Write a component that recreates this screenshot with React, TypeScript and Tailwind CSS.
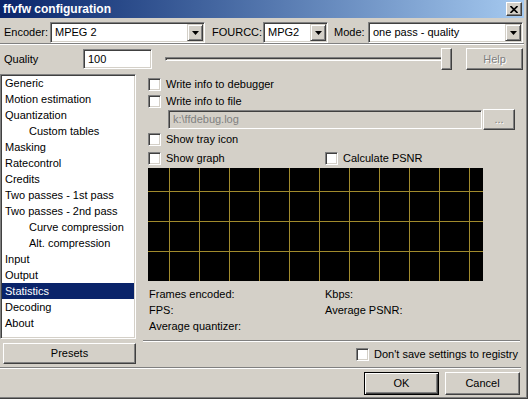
import { useState } from "react";

const pages: [string, boolean][] = [
  ["Generic", false],
  ["Motion estimation", false],
  ["Quantization", false],
  ["Custom tables", true],
  ["Masking", false],
  ["Ratecontrol", false],
  ["Credits", false],
  ["Two passes - 1st pass", false],
  ["Two passes - 2nd pass", false],
  ["Curve compression", true],
  ["Alt. compression", true],
  ["Input", false],
  ["Output", false],
  ["Statistics", false],
  ["Decoding", false],
  ["About", false],
];

const sunken =
  "border border-t-[#808080] border-l-[#808080] border-r-white border-b-white shadow-[inset_1px_1px_0_#404040,inset_-1px_-1px_0_#d4d0c8]";
const raised =
  "border border-t-white border-l-white border-r-[#404040] border-b-[#404040] shadow-[inset_-1px_-1px_0_#808080] bg-[#d4d0c8]";
const disabledText = "text-[#808080] [text-shadow:1px_1px_0_#ffffff]";

function Combo({ value, width }: { value: string; width: string }) {
  return (
    <div className={`${width} h-[21px] bg-white flex items-center p-[1px] ${sunken}`}>
      <span className="flex-1 pl-[3px] whitespace-nowrap overflow-hidden">{value}</span>
      <div className="w-[16px] h-[17px] flex items-center justify-center bg-[#d4d0c8] border border-t-[#d4d0c8] border-l-[#d4d0c8] border-r-[#404040] border-b-[#404040] shadow-[inset_1px_1px_0_#ffffff,inset_-1px_-1px_0_#808080]">
        <svg width="7" height="4" viewBox="0 0 7 4">
          <polygon points="0,0 7,0 3.5,4" fill="#000" />
        </svg>
      </div>
    </div>
  );
}

function Check({ label, checked, onToggle }: { label: string; checked: boolean; onToggle: () => void }) {
  return (
    <div className="flex items-center h-[16px] cursor-default" onClick={onToggle}>
      <div className={`w-[13px] h-[13px] bg-white flex items-center justify-center ${sunken}`}>
        {checked && (
          <svg width="7" height="7" viewBox="0 0 7 7">
            <path d="M0 3l2 2 5-5v2l-5 5-2-2z" fill="#000" />
          </svg>
        )}
      </div>
      <span className="ml-[5px] whitespace-nowrap">{label}</span>
    </div>
  );
}

export default function App() {
  const [page, setPage] = useState(13);
  const [checks, setChecks] = useState<Record<string, boolean>>({});
  const toggle = (k: string) => setChecks((prev) => ({ ...prev, [k]: !prev[k] }));

  return (
    <div className="w-[528px] h-[399px] bg-[#d4d0c8] overflow-hidden text-[11px] leading-none text-black font-['Liberation_Sans',Arial,sans-serif] shadow-[inset_-1px_-1px_0_#404040,inset_-2px_-2px_0_#808080]">
      {/* title bar */}
      <div className="h-[18px] mr-[4px] flex items-center pl-[3px] pr-[2px] bg-gradient-to-r from-[#0a246a] to-[#a6caf0]">
        <span className="text-white font-bold text-[12px]">ffvfw configuration</span>
        <div className={`ml-auto w-[16px] h-[14px] flex items-center justify-center ${raised}`}>
          <svg width="8" height="7" viewBox="0 0 8 7">
            <path d="M0.5 0L7.5 7M7.5 0L0.5 7" stroke="#000" strokeWidth="1.6" />
          </svg>
        </div>
      </div>

      {/* encoder row */}
      <div className="flex items-center h-[21px] mt-[4px]">
        <span className="w-[50px] pl-[4px]">Encoder:</span>
        <Combo value="MPEG 2" width="w-[155px]" />
        <span className="w-[58px] pl-[7px]">FOURCC:</span>
        <Combo value="MPG2" width="w-[65px]" />
        <span className="w-[40px] pl-[6px]">Mode:</span>
        <Combo value="one pass - quality" width="w-[155px]" />
      </div>

      <div className="w-[524px] h-[2px] border-t border-t-[#808080] border-b border-b-white" />

      {/* quality row */}
      <div className="flex items-center h-[22px] mt-[3px]">
        <span className="w-[83px] pl-[4px]">Quality</span>
        <div className={`w-[69px] h-[20px] bg-white flex items-center pl-[4px] ${sunken}`}>100</div>
        <div className="relative ml-[13px] w-[286px] h-[22px] flex items-center">
          <div className="w-full h-[4px] border border-t-[#808080] border-l-[#808080] border-r-white border-b-white shadow-[inset_1px_1px_0_#404040]" />
          <div className={`absolute left-[276px] top-0 w-[11px] h-[22px] ${raised}`} />
        </div>
        <div className={`ml-[15px] w-[57px] h-[22px] flex items-center justify-center ${raised} ${disabledText}`}>
          Help
        </div>
      </div>

      {/* main */}
      <div className="flex h-[292px] mt-[4px]">
        <div className="w-[136px] flex flex-col">
          <div className={`h-[265px] bg-white p-[1px] ${sunken}`}>
            <div className="-mt-px">
              {pages.map(([name, indent], i) => (
                <div
                  key={name}
                  onClick={() => setPage(i)}
                  className={`h-[16px] flex items-center whitespace-nowrap ${indent ? "pl-[27px]" : "pl-[3px]"} ${
                    page === i ? "bg-[#0a246a] text-white" : ""
                  }`}
                >
                  {name}
                </div>
              ))}
            </div>
          </div>
          <div className={`mt-[4px] ml-[3px] w-[133px] h-[21px] flex items-center justify-center ${raised}`}>
            Presets
          </div>
        </div>

        <div className="flex-1 flex flex-col">
          <div className="ml-[12px] mt-[2px]">
            <Check label="Write info to debugger" checked={!!checks.dbg} onToggle={() => toggle("dbg")} />
          </div>
          <div className="ml-[12px] mt-[1px]">
            <Check label="Write info to file" checked={!!checks.file} onToggle={() => toggle("file")} />
          </div>
          <div className="flex items-center h-[21px] ml-[32px]">
            <div className={`w-[314px] h-[19px] flex items-center pl-[4px] text-[#808080] ${sunken}`}>
              k:\ffdebug.log
            </div>
            <div className={`ml-[1px] w-[32px] h-[21px] flex items-center justify-center ${raised} ${disabledText}`}>
              ...
            </div>
          </div>
          <div className="ml-[12px] mt-[1px]">
            <Check label="Show tray icon" checked={!!checks.tray} onToggle={() => toggle("tray")} />
          </div>
          <div className="ml-[12px] mt-[3px] flex">
            <div className="w-[177px]">
              <Check label="Show graph" checked={!!checks.graph} onToggle={() => toggle("graph")} />
            </div>
            <Check label="Calculate PSNR" checked={!!checks.psnr} onToggle={() => toggle("psnr")} />
          </div>
          <div className="ml-[12px] mt-[2px] w-[335px] h-[113px]">
            <svg width="335" height="113" viewBox="0 0 335 113">
              <rect width="335" height="113" fill="#000" />
              {Array.from({ length: 11 }).map((_, k) => (
                <line key={`v${k}`} x1={21.5 + 30 * k} y1="0" x2={21.5 + 30 * k} y2="113" stroke="#a08a2c" strokeWidth="1" />
              ))}
              {[23.5, 53.5, 83.5].map((y) => (
                <line key={`h${y}`} x1="0" y1={y} x2="335" y2={y} stroke="#a08a2c" strokeWidth="1" />
              ))}
            </svg>
          </div>
          <div className="ml-[13px] mt-[5px] grid grid-cols-[176px_auto]">
            <div className="h-[16px] flex items-center">Frames encoded:</div>
            <div className="h-[16px] flex items-center">Kbps:</div>
            <div className="h-[16px] flex items-center">FPS:</div>
            <div className="h-[16px] flex items-center">Average PSNR:</div>
            <div className="h-[16px] flex items-center">Average quantizer:</div>
            <div className="h-[16px] flex items-center" />
          </div>
          <div className="ml-[7px] mt-[6px] w-[377px] h-[2px] border-t border-t-[#808080] border-b border-b-white" />
          <div className="ml-[220px] mt-[4px]">
            <Check label="Don't save settings to registry" checked={!!checks.reg} onToggle={() => toggle("reg")} />
          </div>
        </div>
      </div>

      <div className="mt-[1px] w-[521px] h-[2px] border-t border-t-[#808080] border-b border-b-white" />

      {/* buttons */}
      <div className="flex justify-end gap-[6px] pr-[8px] mt-[3px]">
        <div className="w-[75px] h-[23px] flex items-center justify-center bg-[#d4d0c8] border border-black shadow-[inset_1px_1px_0_#ffffff,inset_-1px_-1px_0_#404040,inset_-2px_-2px_0_#808080]">
          OK
        </div>
        <div className={`w-[75px] h-[23px] flex items-center justify-center ${raised}`}>Cancel</div>
      </div>
    </div>
  );
}
